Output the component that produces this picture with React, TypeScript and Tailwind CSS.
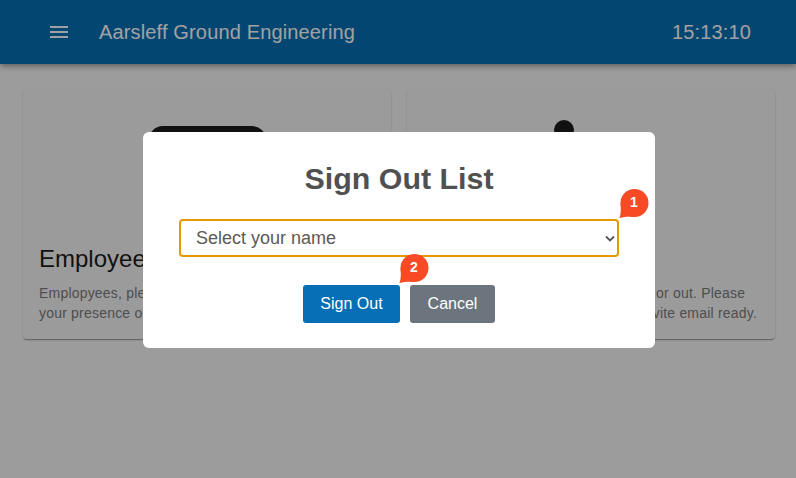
import React from "react";

function Card({ children, title, body }: { children: React.ReactNode; title: string; body: React.ReactNode }) {
  return (
    <div className="flex h-[251px] flex-col rounded bg-[#f6f6f6] shadow-[0_2px_1px_-1px_rgba(0,0,0,0.2),0_1px_1px_0_rgba(0,0,0,0.14),0_1px_3px_0_rgba(0,0,0,0.12)]">
      <div className="flex h-[140px] items-start justify-center overflow-hidden">{children}</div>
      <div className="px-4 pt-[15px]">
        <h2 className="text-[24px] leading-8 text-[#1c1c1c]">{title}</h2>
        <p className="mt-[8px] whitespace-nowrap text-[14px] leading-5 tracking-[0.2px] text-[#7c7c7c]">{body}</p>
      </div>
    </div>
  );
}

function Badge({ n, className }: { n: number; className: string }) {
  return (
    <span className={`absolute flex h-[30px] w-[30px] items-center justify-center pb-[4px] text-[14px] font-bold text-white ${className}`}>
      <svg className="absolute inset-0" width="30" height="30" viewBox="0 0 30 30" fill="#f84b25">
        <circle cx="15.5" cy="14" r="14" />
        <path d="M1.5 14C2 20 2 25 0.5 29 5 28 9 27.5 15 28Z" />
      </svg>
      <span className="relative">{n}</span>
    </span>
  );
}

export default function App() {
  return (
    <div className="relative h-[478px] w-[796px] overflow-hidden bg-[#f8f8f8] font-['Liberation_Sans',Arial,sans-serif]">
      <header className="flex h-16 items-center justify-between bg-[#056fb5] pl-[47px] pr-[45px] text-white shadow-[0_2px_4px_-1px_rgba(0,0,0,0.2),0_4px_5px_0_rgba(0,0,0,0.14),0_1px_10px_0_rgba(0,0,0,0.12)]">
        <div className="flex items-center gap-[28px]">
          <svg width="24" height="24" viewBox="0 0 24 24" fill="currentColor">
            <path d="M3 18h18v-2H3v2zm0-5h18v-2H3v2zm0-7v2h18V6H3z" />
          </svg>
          <span className="text-[20px] leading-6 tracking-[0.15px] -mt-[1px]">Aarsleff Ground Engineering</span>
        </div>
        <span className="text-[20px] leading-6 tracking-[0.15px] -mt-[1px]">15:13:10</span>
      </header>

      <main className="grid grid-cols-2 gap-4 pl-[23px] pr-[21px] pt-6">
        <Card title="Employees" body={<>Emplopyees, please sign in or out to record<br />your presence on the site today.</>}>
          <div className="mt-[38px] h-[140px] w-[117px] rounded-[14px] bg-[#1b1b1b]" />
        </Card>
        <Card title="Visitors" body={<>Visitors and partners, please sign in or out. Please<br />have your company's ID card and invite email ready.</>}>
          <div className="mt-[32px] -ml-[54px] h-5 w-5 rounded-full bg-[#1b1b1b]" />
        </Card>
      </main>

      <div className="absolute inset-0 flex items-start justify-center bg-black/[0.37] pl-[2px] pt-[132px]">
        <div className="relative h-[216px] w-[512px] rounded-[6px] bg-white px-9 pt-[27px] text-center">
          <h1 className="text-[30.4px] font-bold leading-[38px] text-[#505050]">Sign Out List</h1>
          <div className="relative mt-[22px]">
            <select
              defaultValue=""
              className="block h-[38px] w-full appearance-none rounded border-2 border-[#e59a00] bg-white pl-[15px] text-[18px] text-[#5a5a5a] outline-none"
            >
              <option value="">Select your name</option>
            </select>
            <svg className="absolute right-[4px] top-[16px] text-[#555]" width="10" height="8" viewBox="0 0 10 8" fill="none" stroke="currentColor" strokeWidth="1.8">
              <path d="M1 1.5l4 4 4-4" />
            </svg>
          </div>
          <div className="mt-7 flex justify-center gap-[10px]">
            <button className="h-[38px] w-[97px] rounded-[3px] bg-[#056fb5] text-[16px] text-white">Sign Out</button>
            <button className="h-[38px] w-[85px] rounded-[3px] bg-[#6c757d] text-[16px] text-white">Cancel</button>
          </div>
          <Badge n={1} className="left-[476px] top-[57px]" />
          <Badge n={2} className="left-[256px] top-[122px]" />
        </div>
      </div>
    </div>
  );
}
